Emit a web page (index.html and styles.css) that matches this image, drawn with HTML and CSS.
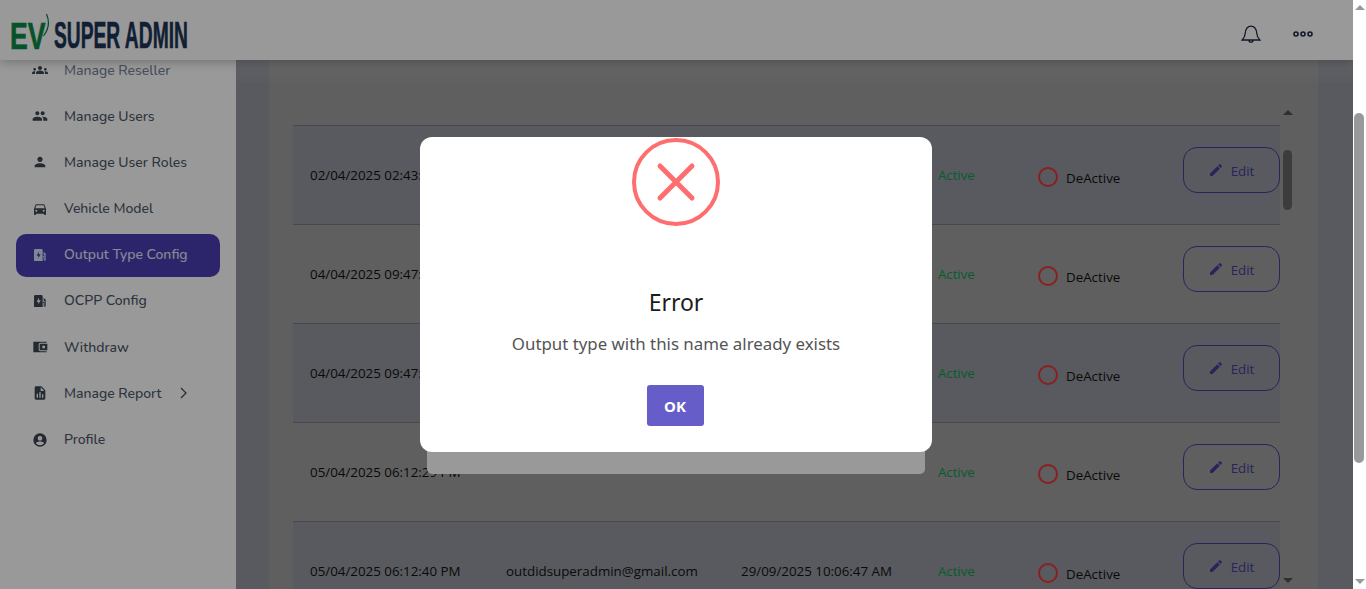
FILE: index.html
```html
<!DOCTYPE html>
<html lang="en">
<head>
<meta charset="utf-8">
<title>EV Super Admin</title>
<link rel="stylesheet" href="styles.css">
</head>
<body>
<div class="app">
  <header class="topbar">
    <div class="logo">
      <span class="logo-ev"><span class="logo-ev-text">EV</span><svg class="leaf" viewBox="0 0 14 36" width="14" height="36"><path d="M9.500 0c3 7 2.500 15-3 22" fill="none" stroke="#0a7a40" stroke-width="1.200"/></svg></span>
      <span class="logo-name">SUPER ADMIN</span>
    </div>
    <div class="top-actions">
      <svg class="bell" viewBox="0 0 20 20" width="20" height="20"><path d="M1.200 16h17.600c-1.800-1.600-2.600-3-3-6.500C15.400 5.500 13.500 2.200 10 2.200S4.600 5.500 4.200 9.500c-.4 3.500-1.200 4.900-3 6.500zM8 16.200a2 2 0 0 0 4 0" fill="none" stroke="#1d2b45" stroke-width="1.300"/></svg>
      <svg class="dots" viewBox="0 0 20 6" width="20" height="6"><g fill="none" stroke="#1d2b45" stroke-width="1.600"><circle cx="3" cy="3" r="2"/><circle cx="10" cy="3" r="2"/><circle cx="17" cy="3" r="2"/></g></svg>
    </div>
  </header>
  <div class="body-row">
    <nav class="sidebar">
      <a class="nav-item faded"><svg class="ico" viewBox="0 0 24 24"><path d="M12 12.800c1.600 0 3 .4 4.200.9 1 .5 1.800 1.500 1.800 2.700V18H6v-1.600c0-1.200.7-2.200 1.800-2.700 1.200-.5 2.600-.9 4.200-.9zM4 13c1.100 0 2-.9 2-2s-.9-2-2-2-2 .9-2 2 .9 2 2 2zm1.100 1.100A7 7 0 0 0 4 14c-1 0-1.900.2-2.800.6A2 2 0 0 0 0 16.400V18h4.500v-1.600c0-.8.2-1.600.6-2.300zM20 13c1.100 0 2-.9 2-2s-.9-2-2-2-2 .9-2 2 .9 2 2 2zm4 3.400a2 2 0 0 0-1.200-1.800A7 7 0 0 0 20 14c-.4 0-.7 0-1.100.1.400.7.6 1.500.6 2.300V18H24v-1.600zM12 6c1.700 0 3 1.300 3 3s-1.300 3-3 3-3-1.300-3-3 1.300-3 3-3z"/></svg><span>Manage Reseller</span></a>
      <a class="nav-item"><svg class="ico" viewBox="0 0 24 24"><path d="M16 11c1.700 0 3-1.300 3-3s-1.300-3-3-3-3 1.300-3 3 1.300 3 3 3zm-8 0c1.700 0 3-1.300 3-3S9.700 5 8 5 5 6.300 5 8s1.300 3 3 3zm0 2c-2.300 0-7 1.200-7 3.500V19h14v-2.500C15 14.200 10.300 13 8 13zm8 0h-1c1.200.8 2 2 2 3.500V19h6v-2.500c0-2.300-4.700-3.500-7-3.500z"/></svg><span>Manage Users</span></a>
      <a class="nav-item"><svg class="ico" viewBox="0 0 24 24"><path d="M12 12c2.200 0 4-1.800 4-4s-1.800-4-4-4-4 1.800-4 4 1.800 4 4 4zm0 2c-2.700 0-8 1.300-8 4v2h16v-2c0-2.700-5.300-4-8-4z"/></svg><span>Manage User Roles</span></a>
      <a class="nav-item"><svg class="ico" viewBox="0 0 24 24"><path d="M18.900 6c-.2-.6-.8-1-1.400-1h-11c-.7 0-1.200.4-1.400 1L3 12v8c0 .6.400 1 1 1h1c.6 0 1-.4 1-1v-1h12v1c0 .6.400 1 1 1h1c.6 0 1-.4 1-1v-8l-2.100-6zM6.500 16a1.500 1.500 0 1 1 0-3 1.500 1.500 0 0 1 0 3zm11 0a1.500 1.500 0 1 1 0-3 1.500 1.500 0 0 1 0 3zM5 11l1.500-4.500h11L19 11H5z"/></svg><span>Vehicle Model</span></a>
      <a class="nav-item active"><svg class="ico" viewBox="0 0 24 24"><path d="M3 21V5c0-1.100.9-2 2-2h9c1.100 0 2 .9 2 2v16H3zm7.500-14L7 13h2.500v4L13 11h-2.500V7z"/><path d="M17.500 7l3 3v9a1.500 1.500 0 0 1-3 0v-4h-1v-1.500h1.300c.4 0 .7.300.7.700V19h.5v-6.500h-1.500z"/></svg><span>Output Type Config</span></a>
      <a class="nav-item"><svg class="ico" viewBox="0 0 24 24"><path d="M3 21V5c0-1.100.9-2 2-2h9c1.100 0 2 .9 2 2v16H3zm7.500-14L7 13h2.500v4L13 11h-2.500V7z"/><path d="M17.500 7l3 3v9a1.500 1.500 0 0 1-3 0v-4h-1v-1.500h1.300c.4 0 .7.300.7.700V19h.5v-6.500h-1.500z"/></svg><span>OCPP Config</span></a>
      <a class="nav-item"><svg class="ico" viewBox="0 0 24 24"><path d="M2 4h20v1.500H13c-2 0-3 1.200-3 3v7c0 1.800 1 3 3 3h9V20H2V4zm11 3h10v10H13c-1 0-1.500-.6-1.500-1.500v-7C11.500 7.600 12 7 13 7zm2.500 3v4h4v-4h-4z"/></svg><span>Withdraw</span></a>
      <a class="nav-item"><svg class="ico" viewBox="0 0 24 24"><path d="M14 2H6a2 2 0 0 0-2 2v16c0 1.100.9 2 2 2h12a2 2 0 0 0 2-2V8l-6-6zM9 19H7v-6h2v6zm4 0h-2v-8h2v8zm4 0h-2v-5h2v5zM13 9V3.500L18.500 9H13z"/></svg><span>Manage Report</span><svg class="chev" viewBox="0 0 10 14" width="10" height="14"><path d="M2 2l5 5-5 5" fill="none" stroke="#3d4654" stroke-width="1.200"/></svg></a>
      <a class="nav-item"><svg class="ico" viewBox="0 0 24 24"><path d="M12 2a10 10 0 1 0 0 20 10 10 0 0 0 0-20zm0 4a3.500 3.500 0 1 1 0 7 3.500 3.500 0 0 1 0-7zm0 14a8 8 0 0 1-6.200-3c.6-1.800 3.600-2.700 6.200-2.700s5.600.9 6.200 2.700A8 8 0 0 1 12 20z"/></svg><span>Profile</span></a>
    </nav>
    <main class="main">
      <section class="card">
        <div class="table-wrap">
          <div class="table">
            <div class="row tint"><span class="c1">02/04/2025 02:43:12 PM</span><span class="c2">outdidsuperadmin@gmail.com</span><span class="c3">29/09/2025 10:06:47 AM</span><span class="c4">Active</span><span class="c5"><i class="radio"></i>DeActive</span><button class="edit"><svg viewBox="0 0 24 24" width="16" height="16"><path d="M3 17.250V21h3.750L17.800 9.940l-3.750-3.750L3 17.250zM20.700 7.040a1 1 0 0 0 0-1.410l-2.340-2.340a1 1 0 0 0-1.410 0l-1.830 1.830 3.750 3.750 1.830-1.830z"/></svg>Edit</button></div>
            <div class="row"><span class="c1">04/04/2025 09:47:18 AM</span><span class="c2">outdidsuperadmin@gmail.com</span><span class="c3">29/09/2025 10:06:47 AM</span><span class="c4">Active</span><span class="c5"><i class="radio"></i>DeActive</span><button class="edit"><svg viewBox="0 0 24 24" width="16" height="16"><path d="M3 17.250V21h3.750L17.800 9.940l-3.750-3.750L3 17.250zM20.700 7.040a1 1 0 0 0 0-1.410l-2.340-2.340a1 1 0 0 0-1.410 0l-1.830 1.830 3.750 3.750 1.830-1.830z"/></svg>Edit</button></div>
            <div class="row tint"><span class="c1">04/04/2025 09:47:52 AM</span><span class="c2">outdidsuperadmin@gmail.com</span><span class="c3">29/09/2025 10:06:47 AM</span><span class="c4">Active</span><span class="c5"><i class="radio"></i>DeActive</span><button class="edit"><svg viewBox="0 0 24 24" width="16" height="16"><path d="M3 17.250V21h3.750L17.800 9.940l-3.750-3.750L3 17.250zM20.700 7.040a1 1 0 0 0 0-1.410l-2.340-2.340a1 1 0 0 0-1.410 0l-1.830 1.830 3.750 3.750 1.830-1.830z"/></svg>Edit</button></div>
            <div class="row"><span class="c1">05/04/2025 06:12:29 PM</span><span class="c2"></span><span class="c3"></span><span class="c4">Active</span><span class="c5"><i class="radio"></i>DeActive</span><button class="edit"><svg viewBox="0 0 24 24" width="16" height="16"><path d="M3 17.250V21h3.750L17.800 9.940l-3.750-3.750L3 17.250zM20.700 7.040a1 1 0 0 0 0-1.410l-2.340-2.340a1 1 0 0 0-1.410 0l-1.830 1.830 3.750 3.750 1.830-1.830z"/></svg>Edit</button></div>
            <div class="row tint"><span class="c1">05/04/2025 06:12:40 PM</span><span class="c2">outdidsuperadmin@gmail.com</span><span class="c3">29/09/2025 10:06:47 AM</span><span class="c4">Active</span><span class="c5"><i class="radio"></i>DeActive</span><button class="edit"><svg viewBox="0 0 24 24" width="16" height="16"><path d="M3 17.250V21h3.750L17.800 9.940l-3.750-3.750L3 17.250zM20.700 7.040a1 1 0 0 0 0-1.410l-2.340-2.340a1 1 0 0 0-1.410 0l-1.830 1.830 3.750 3.750 1.830-1.830z"/></svg>Edit</button></div>
          </div>
          <div class="inner-bar"><i class="tri up"></i><i class="inner-thumb"></i><i class="tri down"></i></div>
        </div>
      </section>
      <div class="under-modal"></div>
    </main>
  </div>
  <div class="backdrop"></div>
  <div class="alert">
    <svg class="alert-icon" viewBox="0 0 88 88" width="88" height="88"><circle cx="44" cy="44" r="42" fill="none" stroke="#ff6e6e" stroke-width="4"/><path d="M28 28l32 32M60 28L28 60" stroke="#ff6e6e" stroke-width="5" stroke-linecap="round"/></svg>
    <h2 class="alert-title">Error</h2>
    <p class="alert-text">Output type with this name already exists</p>
    <button class="alert-ok">OK</button>
  </div>
</div>
<div class="page-bar"><i class="page-up"></i><i class="page-thumb"></i><i class="page-down"></i></div>
</body>
</html>
```
FILE: styles.css
```css
* { box-sizing: border-box; }
html, body { height: 100%; }
body { margin: 0; display: flex; overflow: hidden; background: #fff; font-family: Nunito, "Noto Sans", "Open Sans", sans-serif; }
.app { position: relative; flex: 1; height: 589px; overflow: hidden; display: flex; flex-direction: column; }
.topbar { height: 60px; flex: none; background: #fff; display: flex; align-items: center; justify-content: space-between; padding: 0 40px 0 10px; box-shadow: 0 2px 10px rgba(0,0,0,.25); position: relative; z-index: 4; }
.logo { display: flex; align-items: center; gap: 7px; margin-top: 12px; }
.logo-ev { position: relative; display: block; width: 37px; height: 27px; }
.logo-ev-text { display: block; color: #0a8a45; font: 700 37px/27px "Liberation Sans", sans-serif; -webkit-text-stroke: .6px #0a8a45; transform: scaleX(.72); transform-origin: left; white-space: nowrap; }
.leaf { position: absolute; left: 27px; top: -9px; }
.logo-name { display: block; color: #1d3557; font: 700 36px/26px "Liberation Sans", sans-serif; -webkit-text-stroke: .6px #1d3557; transform: scaleX(.534); transform-origin: left; white-space: nowrap; width: 133px; }
.top-actions { display: flex; align-items: center; gap: 32px; margin-top: 8px; }
.body-row { flex: 1; display: flex; min-height: 0; }
.sidebar { width: 236px; flex: none; background: #fff; padding: 0 16px; display: flex; flex-direction: column; margin-top: -11px; }
.nav-item { height: 43px; margin-bottom: 3.200px; display: flex; align-items: center; padding: 0 0 1px 16px; border-radius: 10px; color: #4b5768; font-size: 14px; font-weight: 500; gap: 16px; }
.nav-item.faded { color: #76839a; }
.nav-item .ico { width: 16px; height: 16px; fill: #3d4654; flex: none; }
.nav-item.active { background: #4a3fb5; color: #e4e4f4; }
.nav-item.active .ico { fill: #d0e4f4; }
.chev { margin-left: 1px; }
.main { flex: 1; position: relative; background: #eef2ff; padding: 0 35px 0 33px; min-width: 0; }
.card { background: #fff; height: 100%; padding: 65px 25px 0 24px; }
.table-wrap { display: flex; }
.table { width: 987px; flex: none; }
.row { height: 99px; border-top: 1px solid #c0c4d0; display: flex; align-items: center; position: relative; font-size: 13.350px; color: #111; font-family: "Open Sans", "Noto Sans", sans-serif; white-space: nowrap; }
.row > * { position: relative; z-index: 2; }
.row.tint { background: #eef2ff; }
.c1 { width: 213px; padding-left: 17px; }
.c2 { width: 235px; }
.c3 { width: 197px; }
.c4 { width: 100px; color: #0a9a50; font-size: 13.200px; }
.c5 { width: 145px; display: flex; align-items: center; gap: 8px; margin-top: 5px; }
.radio { width: 20px; height: 20px; margin-top: -2px; border: 2px solid #e53535; border-radius: 50%; }
.edit { width: 97px; height: 46px; margin-top: -10px; border: 1px solid #453d98; border-radius: 14px; background: transparent; color: #453d98; display: flex; align-items: center; justify-content: center; gap: 7px; font: 13.350px "Open Sans", sans-serif; padding: 1px 0 0; }
.edit svg { fill: #453d98; margin: -2px 0 0 -1px; }
.inner-bar { width: 13px; margin-left: 1px; height: 479px; margin-top: -20px; position: relative; z-index: 2; }
.tri { width: 0; height: 0; border-left: 5px solid transparent; border-right: 5px solid transparent; position: absolute; left: 2px; }
.tri.up { top: 5px; border-bottom: 5px solid #505050; }
.tri.down { bottom: 1px; border-top: 5px solid #505050; }
.inner-thumb { position: absolute; left: 2px; top: 45px; width: 9px; height: 60px; border-radius: 5px; background: #646464; }
.under-modal { position: absolute; left: 191px; top: 100px; width: 498px; height: 314px; background: #fff; border-radius: 5px; z-index: 2; }
.main::before { content: ""; position: absolute; inset: 0; background: rgba(0,0,0,.38); z-index: 1; }
.main::after { content: ""; position: absolute; left: 0; right: 0; top: 0; height: 26px; background: linear-gradient(rgba(255,255,255,.14), rgba(255,255,255,0)); z-index: 1; }
.backdrop { position: absolute; inset: 0; background: rgba(0,0,0,.4); z-index: 5; }
.alert { position: absolute; z-index: 6; left: 420px; top: 137px; width: 512px; height: 315px; background: #fff; border-radius: 12px; display: flex; flex-direction: column; align-items: center; font-family: "Noto Sans", "Open Sans", sans-serif; }
.alert-icon { margin-top: 1px; flex: none; }
.alert-title { margin: 60px 0 0; font-size: 23px; line-height: 33px; font-weight: 400; color: #1c1c1c; }
.alert-text { margin: 13px 0 0; font-size: 16.850px; line-height: 24px; color: #545454; }
.alert-ok { margin: 29px 2px 0 0; width: 57px; height: 41px; border: 0; border-radius: 3px; background: #665dc8; color: #fff; font: 700 15px "Noto Sans", sans-serif; padding: 0; }
.page-bar { width: 13px; flex: none; height: 589px; position: relative; background: #fff; }
.page-up, .page-down { position: absolute; left: 2px; width: 0; height: 0; border-left: 5px solid transparent; border-right: 5px solid transparent; }
.page-up { top: 5px; border-bottom: 5px solid #9a9a9a; }
.page-down { bottom: 5px; border-top: 5px solid #9a9a9a; }
.page-thumb { position: absolute; left: 1px; top: 113px; width: 10px; height: 350px; border-radius: 5px; background: #999; }
```
